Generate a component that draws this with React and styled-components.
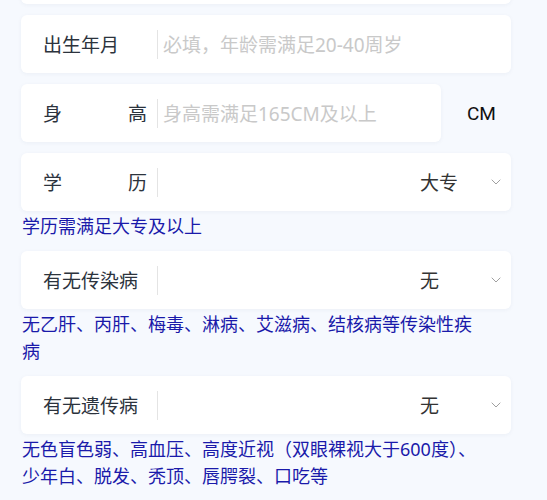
import React from 'react'
import styled, { createGlobalStyle } from 'styled-components'

const GlobalStyle = createGlobalStyle`
  html, body {
    margin: 0;
    padding: 0;
    background: #f6f9fe;
    font-family: "Noto Sans", "Noto Sans CJK SC", sans-serif;
  }
`

const fields = [
  { label: '出生年月', placeholder: '必填，年龄需满足20-40周岁' },
  { label: '身高', placeholder: '身高需满足165CM及以上', spread: true, unit: 'CM' },
  { label: '学历', value: '大专', spread: true, select: true, hint: '学历需满足大专及以上' },
  { label: '有无传染病', value: '无', select: true, hint: '无乙肝、丙肝、梅毒、淋病、艾滋病、结核病等传染性疾病' },
  { label: '有无遗传病', value: '无', select: true, hint: '无色盲色弱、高血压、高度近视（双眼裸视大于600度）、少年白、脱发、秃顶、唇腭裂、口吃等' },
]

const Chevron = () => (
  <svg width="10" height="6" viewBox="0 0 10 6" fill="none">
    <path d="M0.7 0.7 L5 5 L9.3 0.7" stroke="#a0a0a0" strokeWidth="1" />
  </svg>
)

const App = () => {
  return (
    <Page>
      <GlobalStyle />
      <List>
        {/* the field above is scrolled out of view, only its card edge shows */}
        <Card />
        {fields.map((f) => (
          <Group key={f.label}>
            <Row>
              <Card>
                <Label spread={f.spread ? 1 : 0}>
                  {f.label.split('').map((ch, i) => <span key={i}>{ch}</span>)}
                </Label>
                <Divider />
                {f.select ? (
                  <SelectArea>
                    <Value>{f.value}</Value>
                    <Chevron />
                  </SelectArea>
                ) : (
                  <Placeholder>{f.placeholder}</Placeholder>
                )}
              </Card>
              {f.unit && <Unit>{f.unit}</Unit>}
            </Row>
            {f.hint && <Hint>{f.hint}</Hint>}
          </Group>
        ))}
      </List>
    </Page>
  )
}

export default App

const Page = styled.div`
  width: 547px;
  height: 500px;
  overflow: hidden;
`

const List = styled.div`
  display: flex;
  flex-direction: column;
  gap: 11px;
  width: 490px;
  padding-left: 21px;
  margin-top: -54px;
`

const Group = styled.div`
  display: flex;
  flex-direction: column;
`

const Row = styled.div`
  display: flex;
  align-items: center;
`

const Card = styled.div`
  flex: 1;
  min-height: 58px;
  display: flex;
  align-items: center;
  background: #fff;
  border-radius: 6px;
  box-shadow: 0 1px 4px rgba(40, 60, 100, 0.05);
  padding: 0 10px 0 22px;
`

const Label = styled.div`
  width: 104px;
  display: flex;
  justify-content: ${(p) => (p.spread ? 'space-between' : 'flex-start')};
  font-size: 19px;
  color: #2c333d;
  margin-right: 10px;
`

const Divider = styled.div`
  width: 1px;
  height: 29px;
  background: #e4e4e4;
  margin-right: 5px;
`

const Placeholder = styled.div`
  font-size: 19px;
  color: #c9c9c9;
`

const SelectArea = styled.div`
  flex: 1;
  display: flex;
  align-items: center;
  justify-content: flex-end;
`

const Value = styled.div`
  width: 71px;
  font-size: 19px;
  color: #333;
`

const Unit = styled.div`
  width: 44px;
  margin-left: 26px;
  font-family: Roboto, "Noto Sans", sans-serif;
  font-size: 19px;
  color: #111;
`

const Hint = styled.div`
  margin-top: 2px;
  padding: 0 28px 0 1px;
  font-size: 18px;
  line-height: 27px;
  color: #1a1aaa;
`
